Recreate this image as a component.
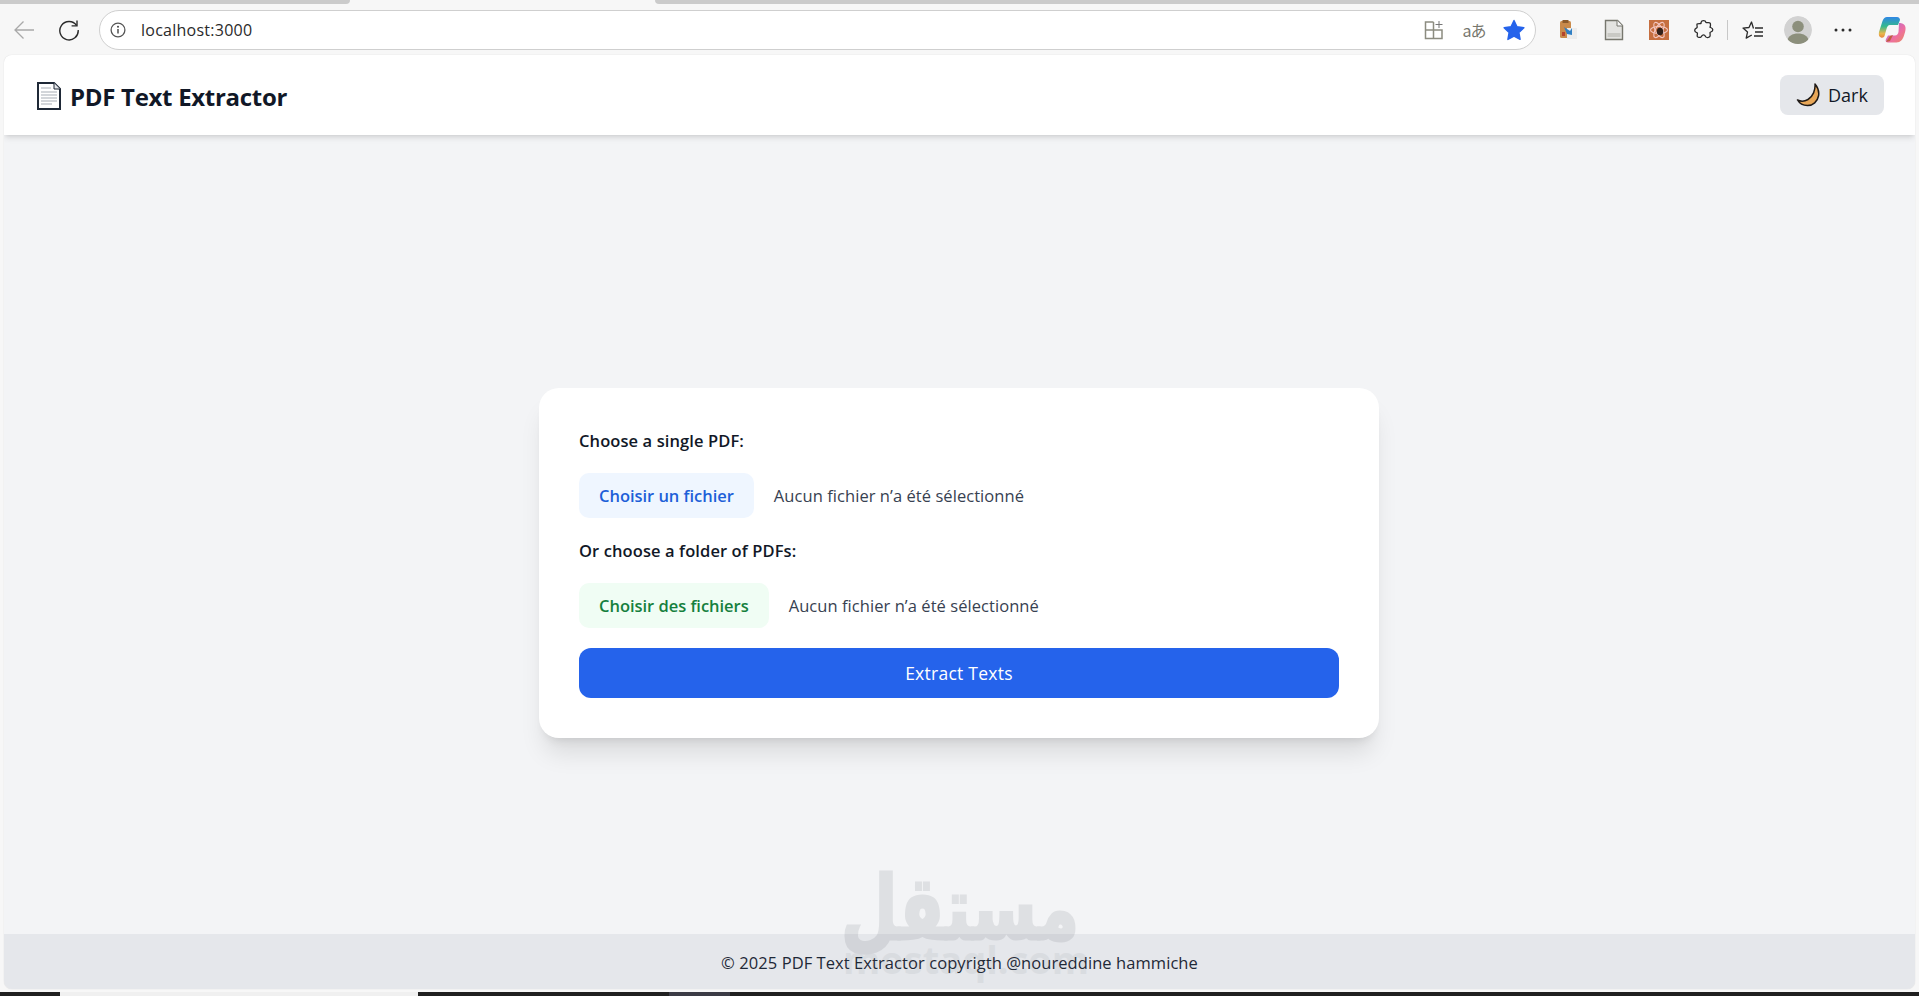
<div class="screen">
  <div class="tabstrip">
    <div class="tab-a"></div>
    <div class="tab-active"></div>
    <div class="tab-b"></div>
  </div>

  <div class="toolbar">
    <span class="tb">
      <svg width="22" height="22" viewBox="0 0 22 22" fill="none" stroke="#a9a9a9" stroke-width="1.3"><path d="M21 11H2M10.5 2.5 2 11l8.5 8.5"/></svg>
    </span>
    <span class="tb">
      <svg width="22" height="22" viewBox="0 0 22 22" fill="none" stroke="#2b2b2b" stroke-width="1.4"><path d="M18.6 6.5A9.2 9.2 0 1 0 20.2 11"/><path d="M19 1.5v5.4h-5.4"/></svg>
    </span>
    <div class="address">
      <svg class="info" width="16" height="16" viewBox="0 0 16 16" fill="none"><circle cx="8" cy="8" r="6.9" stroke="#555" stroke-width="1.3"/><path d="M8 7v4.5" stroke="#444" stroke-width="1.4"/><circle cx="8" cy="4.8" r="1" fill="#444"/></svg>
      <span class="url">localhost:3000</span>
      <span class="addr-icons">
        <span class="ai">
          <svg width="20" height="20" viewBox="0 0 20 20" fill="none" stroke="#8c8c80" stroke-width="1.5"><path d="M9.5 2H1.5v16.500h16.500V10H1.500M9.500 2v16.500"/><path d="M15 1v7M11.500 4.500h7" stroke="#777" stroke-width="1"/></svg>
        </span>
        <span class="ai aa">aあ</span>
        <span class="ai">
          <svg width="22" height="22" viewBox="0 0 22 22"><path d="M11 1.5l3 6.3 6.9.9-5 4.8 1.2 6.9L11 17.2l-6.1 3.2 1.2-6.9-5-4.8 6.9-.9z" fill="#2563eb" stroke="#2563eb" stroke-linejoin="round" stroke-width="1.4"/></svg>
        </span>
      </span>
    </div>
    <span class="ext-gap"></span>
    <span class="tb">
      <svg width="20" height="22" viewBox="0 0 20 22"><rect x="1" y="2" width="11" height="17" rx="1.5" fill="#c98a4b"/><rect x="3.5" y="1" width="6" height="3" fill="#8b5a2b"/><rect x="8" y="9" width="10" height="11" fill="#ececec"/><path d="M5 8l6 4 2-3v7l-5-1z" fill="#2f7fc4"/><rect x="3" y="13" width="3" height="4" fill="#b4442c"/></svg>
    </span>
    <span class="tb">
      <svg width="20" height="22" viewBox="0 0 20 22"><path d="M1.5 1.5h12l5 5v14h-17z" fill="#e3e3e0" stroke="#77776e" stroke-width="1.4"/><path d="M13 1.5v5.5h5.5" fill="#f5f5f5" stroke="#77776e"/><rect x="3.5" y="14" width="13" height="4" fill="#c9c9c4"/></svg>
    </span>
    <span class="tb">
      <svg width="20" height="20" viewBox="0 0 20 20"><rect width="20" height="20" fill="#c66f40"/><g fill="none" stroke="#f3c6c0" stroke-width="1.1"><ellipse cx="10" cy="10" rx="8.5" ry="3.5"/><ellipse cx="10" cy="10" rx="8.5" ry="3.5" transform="rotate(60 10 10)"/><ellipse cx="10" cy="10" rx="8.5" ry="3.5" transform="rotate(120 10 10)"/></g><ellipse cx="11" cy="11.5" rx="3.2" ry="3.8" fill="#33211a"/></svg>
    </span>
    <span class="tb">
      <svg width="20" height="22" viewBox="0 0 20 22" fill="none" stroke="#2b2b2b" stroke-width="1.3" stroke-linejoin="round"><path d="M7 3.500a2.600 2.600 0 0 1 5 0c0 .6 3.300-.3 4 .5.800.8.500 3.500 0 4-.4.600 2.800.4 2.800 2.800s-2.800 2-2.800 2.700c0 1 .6 3.500-.3 4.300-.9.800-3 1-3.900.1-.6-.7-.6-2-2.300-2s-1.800 1.800-2.700 2.200c-1 .4-3 .2-3.500-.6-.5-.8.500-2.800 0-3.500-.5-.7-2.600-.6-2.600-2.800 0-2 2-2 2.400-2.700.4-.7-.6-2.700 0-3.500.7-.8 3.900-.2 3.900-.5z"/></svg>
    </span>
    <span class="divider"></span>
    <span class="tb">
      <svg width="22" height="22" viewBox="0 0 22 22" fill="none" stroke="#2b2b2b" stroke-width="1.3" stroke-linejoin="round"><path d="M11.500 9.500 9.500 3 7 8.500l-6 .6 4.500 4-1.300 6 5.600-3.100"/><path d="M13 9h8M13 13h8M12 17h9"/></svg>
    </span>
    <span class="tb">
      <span class="avatar">
        <svg width="28" height="28" viewBox="0 0 28 28"><circle cx="14" cy="14" r="14" fill="#d2d2d2"/><circle cx="14" cy="10.500" r="5.800" fill="#8c8f7c"/><path d="M3.500 25c0-5 5-7.500 10.500-7.500S24.500 20 24.500 25a14 14 0 0 1-21 0z" fill="#8c8f7c"/></svg>
      </span>
    </span>
    <span class="tb dots">
      <svg width="18" height="4" viewBox="0 0 18 4" fill="#2b2b2b"><circle cx="2" cy="2" r="1.500"/><circle cx="9" cy="2" r="1.500"/><circle cx="16" cy="2" r="1.500"/></svg>
    </span>
    <span class="tb last">
      <svg width="28" height="28" viewBox="0 0 28 28">
        <defs>
          <linearGradient id="cpa" x1="0" y1="0" x2="0" y2="1"><stop offset="0" stop-color="#2f86e6"/><stop offset=".45" stop-color="#35b98e"/><stop offset=".8" stop-color="#e8b84c"/><stop offset="1" stop-color="#e8853f"/></linearGradient>
          <linearGradient id="cpb" x1="0" y1="0" x2="1" y2="1"><stop offset="0" stop-color="#a66be0"/><stop offset=".6" stop-color="#ee6fa0"/><stop offset="1" stop-color="#e98b5e"/></linearGradient>
        </defs>
        <path d="M9 1h10c2 0 3 1.500 3 3l-2 5H12c-2 0-3 2-3.500 4L6.500 20c-.6 1.500-2 2-3.500 1.500C1 21 .5 19 1 16L4.500 5C5.500 2.500 7 1 9 1z" fill="url(#cpa)"/>
        <path d="M21 7c3 0 6 1 6.500 4.500.3 2-.5 5-1.500 8-1.200 4-3.500 7-7.500 7H10c-2 0-3-1.500-2-3.500l2-3.500h7c2 0 3-1.500 3.500-3.500z" fill="url(#cpb)"/>
        <path d="M12 20l3-1-3 6-4 1z" fill="#c0603f"/>
      </svg>
    </span>
  </div>

  <div class="page">
    <header class="header">
      <div class="brand">
        <svg class="doc" width="24" height="28" viewBox="0 0 24 28"><path d="M1 1h16l6 6v20H1z" fill="#fff" stroke="#1f2937" stroke-width="2"/><path d="M17 1v6h6" fill="#e5e7eb" stroke="#1f2937" stroke-width="1"/><path d="M4 6h10M4 10h16M4 13h16M4 16h16M4 19h16M4 22h11" stroke="#a8adb5" stroke-width="1.200"/></svg>
        <h1>PDF Text Extractor</h1>
      </div>
      <button class="theme">
        <svg width="24" height="24" viewBox="0 0 24 24"><path d="M19 1c2.500 3 4.500 7 3.500 12-1 5.500-5.500 9.500-11 9.500-4.500 0-8-2-10-5.500 3 1.500 7 1.500 10.500-.5C17 13.500 19.500 7 19 1z" fill="#e8a758" stroke="#1f1a17" stroke-width="1.500" stroke-linejoin="round"/></svg>
        <span>Dark</span>
      </button>
    </header>

    <main class="main">
      <form class="card">
        <div class="label first">Choose a single PDF:</div>
        <div class="file-row">
          <span class="file-btn blue">Choisir un fichier</span>
          <span class="file-name">Aucun fichier n’a été sélectionné</span>
        </div>
        <div class="label second">Or choose a folder of PDFs:</div>
        <div class="file-row">
          <span class="file-btn green">Choisir des fichiers</span>
          <span class="file-name">Aucun fichier n’a été sélectionné</span>
        </div>
        <button type="button" class="extract">Extract Texts</button>
      </form>
    </main>

    <footer class="footer">© 2025 PDF Text Extractor copyrigth @noureddine hammiche</footer>

    <div class="watermark" aria-hidden="true">
      <div class="wm-ar" dir="rtl" lang="ar">مستقل</div>
      <div class="wm-en">mostaql.com</div>
    </div>
  </div>

  <div class="taskbar">
    <span class="task-light"></span>
    <span class="task-grey"></span>
  </div>
</div>

<style>
  :global(body) {
    margin: 0;
    overflow: hidden;
    background: #f7f7f7;
  }
  .screen {
    width: 1919px;
    height: 996px;
    display: flex;
    flex-direction: column;
    background: #f7f7f7;
    font-family: "Open Sans", "Noto Sans", sans-serif;
    color: #111827;
    overflow: hidden;
  }
  .tabstrip {
    height: 4px;
    display: flex;
    flex: none;
  }
  .tab-a {
    width: 350px;
    background: #cbcbcb;
    border-bottom-right-radius: 4px;
  }
  .tab-active {
    width: 305px;
    background: #f7f7f7;
  }
  .tab-b {
    flex: 1;
    background: #cbcbcb;
    border-bottom-left-radius: 4px;
  }
  .toolbar {
    height: 51px;
    flex: none;
    display: flex;
    align-items: center;
    padding-left: 1px;
    box-sizing: border-box;
  }
  .tb {
    width: 45px;
    height: 40px;
    flex: none;
    display: flex;
    align-items: center;
    justify-content: center;
  }
  .tb.last {
    width: 47px;
    margin-left: 3px;
  }
  .divider {
    width: 1px;
    height: 20px;
    background: #c8c8c8;
    margin: 0 2px 0 1px;
    flex: none;
  }
  .avatar {
    display: flex;
    border-radius: 50%;
    overflow: hidden;
  }
  .address {
    width: 1437px;
    height: 40px;
    flex: none;
    margin-left: 8px;
    box-sizing: border-box;
    background: #fff;
    border: 1px solid #cfcfcf;
    border-radius: 20px;
    display: flex;
    align-items: center;
    padding-left: 10px;
  }
  .url {
    margin-left: 15px;
    font-size: 16px;
    font-family: "Open Sans", sans-serif;
    letter-spacing: 0.250px;
    color: #2a2a2a;
  }
  .addr-icons {
    margin-left: auto;
    margin-right: 1px;
    display: flex;
    align-items: center;
  }
  .ai {
    width: 40px;
    display: flex;
    justify-content: center;
    align-items: center;
  }
  .aa {
    font-size: 16px;
    color: #77776e;
    font-family: "Noto Sans CJK JP", sans-serif;
    letter-spacing: -1px;
  }
  .ext-gap {
    width: 10px;
    flex: none;
  }
  .page {
    position: relative;
    flex: 1;
    margin: 0 4px;
    min-height: 0;
    display: flex;
    flex-direction: column;
    background: #f3f4f6;
    border-radius: 8px;
    overflow: hidden;
    box-shadow: 0 0 1px rgba(0, 0, 0, 0.2);
  }
  .header {
    height: 80px;
    flex: none;
    box-sizing: border-box;
    background: #fff;
    display: flex;
    align-items: center;
    justify-content: space-between;
    padding: 0 31px 0 33px;
    box-shadow: 0 4px 6px -1px rgba(0, 0, 0, 0.1), 0 2px 4px -2px rgba(0, 0, 0, 0.1);
    position: relative;
  }
  .brand {
    display: flex;
    align-items: center;
    gap: 9px;
  }
  .doc {
    margin-top: 2px;
  }
  h1 {
    margin: 3px 0 0;
    font-size: 24px;
    font-weight: 700;
    letter-spacing: -0.300px;
    line-height: 32px;
  }
  .theme {
    height: 40px;
    width: 104px;
    border: 0;
    border-radius: 8px;
    background: #e5e7eb;
    display: flex;
    align-items: center;
    justify-content: center;
    gap: 8px;
    padding: 0;
    font: inherit;
    font-size: 18px;
    color: #111827;
  }
  .main {
    flex: 1;
    display: flex;
    justify-content: center;
    align-items: flex-start;
    padding: 253px 1px 0 0;
    box-sizing: border-box;
  }
  .card {
    width: 840px;
    height: 350px;
    box-sizing: border-box;
    padding: 40px;
    background: #fff;
    border-radius: 20px;
    box-shadow: 0 20px 25px -5px rgba(0, 0, 0, 0.1), 0 8px 10px -6px rgba(0, 0, 0, 0.1);
    display: flex;
    flex-direction: column;
  }
  .label {
    font-size: 16.500px;
    font-weight: 600;
    line-height: 24px;
    letter-spacing: 0.100px;
    margin-bottom: 20px;
  }
  .label.first {
    margin-top: 1px;
  }
  .label.second {
    margin-top: 21px;
  }
  .file-row {
    display: flex;
    align-items: center;
    gap: 20px;
  }
  .file-btn {
    height: 45px;
    display: flex;
    align-items: center;
    padding: 0 20px;
    border-radius: 10px;
    font-size: 16.500px;
    font-weight: 600;
    letter-spacing: -0.030px;
  }
  .blue {
    background: #eff6ff;
    color: #1d5fd8;
  }
  .green {
    background: #f0fdf4;
    color: #15803d;
  }
  .file-name {
    font-size: 16.500px;
    letter-spacing: 0.060px;
    color: #374151;
  }
  .extract {
    margin-top: 20px;
    height: 50px;
    border: 0;
    border-radius: 12px;
    background: #2563eb;
    color: #fff;
    font: inherit;
    font-size: 17.500px;
    font-weight: 500;
    letter-spacing: 0.260px;
  }
  .footer {
    height: 55px;
    flex: none;
    box-sizing: border-box;
    padding-top: 2px;
    background: #e5e7eb;
    display: flex;
    align-items: center;
    justify-content: center;
    font-size: 16.500px;
    letter-spacing: 0.070px;
    color: #1f2937;
  }
  .watermark {
    position: absolute;
    left: 839px;
    top: 808px;
    width: 230px;
    text-align: center;
    color: #5a5f68;
    opacity: 0.13;
    pointer-events: none;
  }
  .wm-ar {
    font-family: "DejaVu Sans", sans-serif;
    font-weight: 700;
    font-size: 88px;
    line-height: 76px;
    white-space: nowrap;
    transform: translate(36px, 8px) scaleX(0.74);
    -webkit-text-stroke: 3px #5a5f68;
    paint-order: stroke fill;
  }
  .wm-en {
    font-family: "Open Sans", sans-serif;
    font-weight: 700;
    font-size: 38px;
    line-height: 40px;
    opacity: 0.6;
  }
  .taskbar {
    height: 4px;
    flex: none;
    margin-top: 3px;
    background: #202020;
    display: flex;
  }
  .task-light {
    margin-left: 60px;
    width: 358px;
    background: #f0f0f0;
  }
  .task-grey {
    margin-left: 251px;
    width: 61px;
    background: #3b3b45;
  }
</style>
